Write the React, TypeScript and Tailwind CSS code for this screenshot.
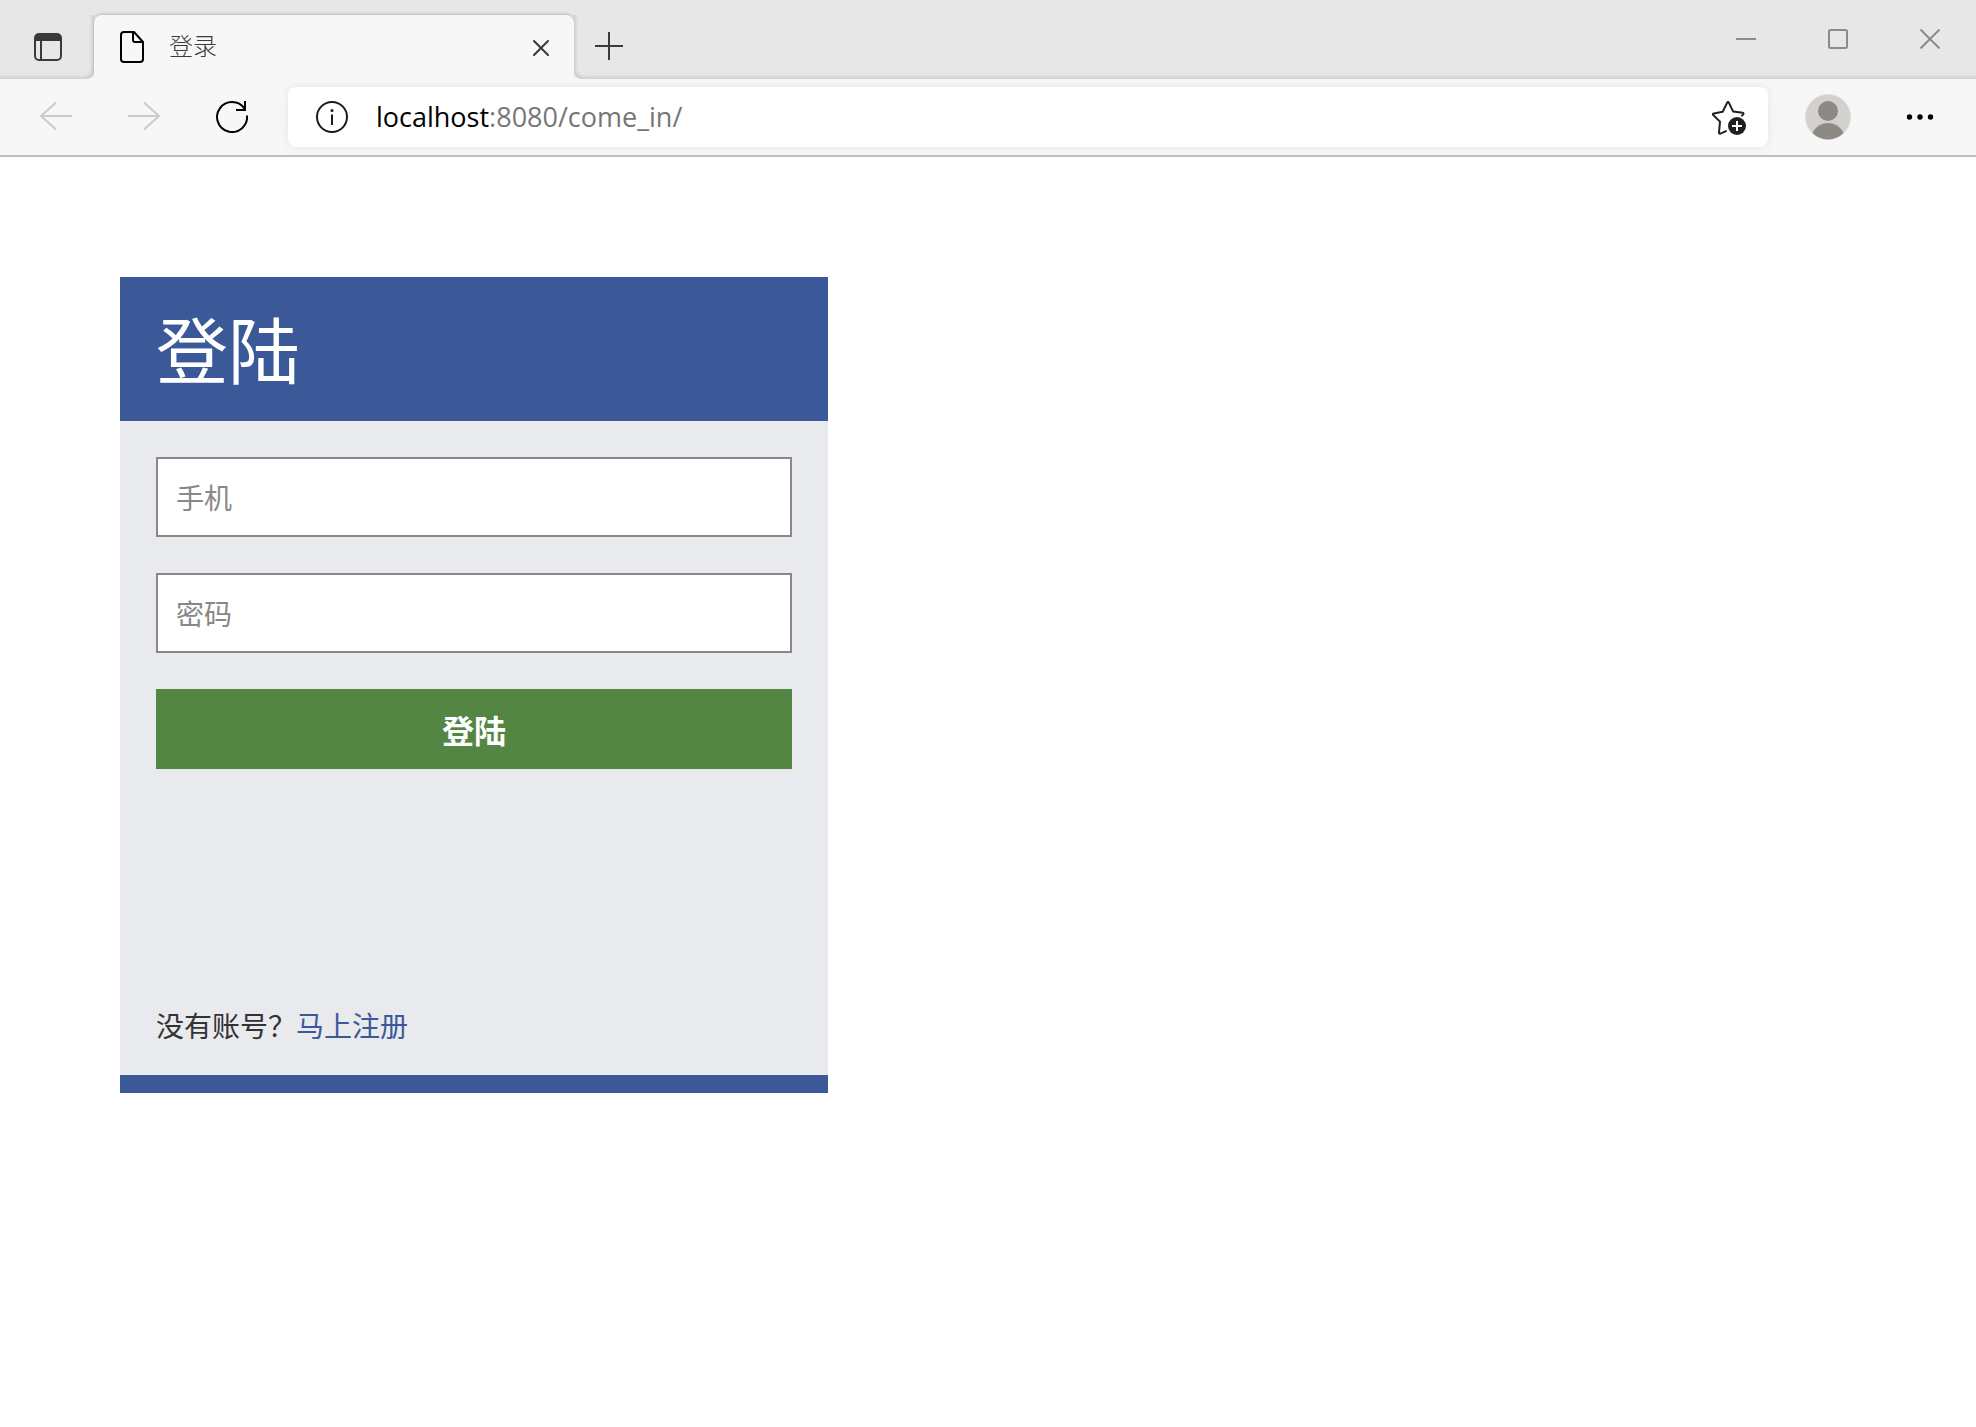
import { useState } from "react";

function TabsMenuIcon() {
  return (
    <svg width="28" height="28" viewBox="0 0 28 28" fill="none" aria-hidden="true">
      <rect x="1" y="1" width="26" height="26" rx="4" stroke="#3a3a3a" strokeWidth="2" />
      <path d="M1 8V5a4 4 0 0 1 4-4h18a4 4 0 0 1 4 4v3z" fill="#3a3a3a" />
      <path d="M7 8v19" stroke="#3a3a3a" strokeWidth="2" />
    </svg>
  );
}

function PageIcon() {
  return (
    <svg width="24" height="32" viewBox="0 0 24 32" fill="none" stroke="#000" strokeWidth="2" strokeLinejoin="round" aria-hidden="true">
      <path d="M4 1h10l9 10v17a3 3 0 0 1-3 3H4a3 3 0 0 1-3-3V4a3 3 0 0 1 3-3z" />
      <path d="M13 1v8a2 2 0 0 0 2 2h8" />
    </svg>
  );
}

function CrossIcon() {
  return (
    <svg width="16" height="18" viewBox="0 -2 16 18" stroke="#3a3a3a" strokeWidth="2" strokeLinecap="round" aria-hidden="true">
      <path d="M1 1l14 14M15 1L1 15" />
    </svg>
  );
}

function PlusIcon() {
  return (
    <svg width="28" height="30" viewBox="0 0 28 30" stroke="#3a3a3a" strokeWidth="2" aria-hidden="true">
      <path d="M0 14h28M14 0v28" />
    </svg>
  );
}

function BackIcon() {
  return (
    <svg width="32" height="30" viewBox="0 0 32 30" fill="none" stroke="#cacaca" strokeWidth="2" strokeLinejoin="round" aria-hidden="true">
      <path d="M16 0.5L1 14l15 13.5M1 14h31" />
    </svg>
  );
}

function ForwardIcon() {
  return (
    <svg width="32" height="30" viewBox="0 0 32 30" fill="none" stroke="#cacaca" strokeWidth="2" strokeLinejoin="round" aria-hidden="true">
      <path d="M16 0.5L31 14 16 27.5M31 14H0" />
    </svg>
  );
}

function ReloadIcon() {
  return (
    <svg width="32" height="32" viewBox="0 0 32 32" fill="none" stroke="#000" strokeWidth="2" aria-hidden="true">
      <path d="M31 14.5A15 15 0 1 1 28.5 7.6" />
      <path d="M29 0v9h-9" />
    </svg>
  );
}

function InfoIcon() {
  return (
    <svg width="32" height="32" viewBox="0 0 32 32" fill="none" aria-hidden="true">
      <circle cx="16" cy="16" r="15" stroke="#1b1b1b" strokeWidth="2" />
      <circle cx="16" cy="9.6" r="1.5" fill="#1b1b1b" />
      <path d="M16 13.5V24" stroke="#1b1b1b" strokeWidth="2" />
    </svg>
  );
}

function AddFavoriteIcon() {
  return (
    <svg width="34" height="36" viewBox="0 -2 34 36" fill="none" aria-hidden="true">
      <path
        d="M14 30.2l-5.6 2.5a1 1 0 0 1-1.4-1.1L8 20.6 1.2 14a.9.9 0 0 1 .5-1.6l9-1.6 4.500-9.200a.9.9 0 0 1 1.6 0l4.400 9 9.400 1.200c.9.1 1.100 1 .6 1.600L30 14.600"
        stroke="#202020"
        strokeWidth="2"
        strokeLinecap="round"
        strokeLinejoin="round"
      />
      <circle cx="25" cy="25" r="9" fill="#202020" />
      <path d="M20 25h10M25 20v10" stroke="#fff" strokeWidth="2" />
    </svg>
  );
}

function ProfileIcon() {
  return (
    <svg width="46" height="46" viewBox="0 0 46 46" aria-hidden="true">
      <circle cx="23" cy="23" r="22.5" fill="#d2d1cd" stroke="#dedddb" />
      <circle cx="23" cy="17" r="10" fill="#8d8985" />
      <path d="M7.5 39C10.5 32.5 16.5 29 23 29s12.5 3.5 15.5 10A22 22 0 0 1 7.5 39z" fill="#8d8985" />
    </svg>
  );
}

function MoreIcon() {
  return (
    <svg width="28" height="6" viewBox="0 0 28 6" aria-hidden="true">
      <circle cx="3.5" cy="3" r="2.7" />
      <circle cx="14" cy="3" r="2.7" />
      <circle cx="24.5" cy="3" r="2.7" />
    </svg>
  );
}

const windowControls = [
  { label: "最小化", icon: <path d="M0 10h20" /> },
  { label: "最大化", icon: <rect x="1" y="1" width="18" height="18" rx="1.5" /> },
  { label: "关闭", icon: <path d="M0.5 0.5l19 19M19.5 0.5l-19 19" /> },
];

function TabStrip() {
  return (
    <div className="flex h-[79px] overflow-hidden bg-[#f7f7f7]">
      <div className="flex w-[94px] shrink-0 flex-col bg-linear-to-b from-[#e7e7e7] from-50% to-transparent to-50%">
        <div className="h-[15px] shrink-0" />
        <div className="flex flex-1 items-center rounded-br-lg bg-[#e7e7e7] pl-[34px] shadow-[inset_-2px_-2px_4px_-1px_rgba(0,0,0,0.16)]">
          <button type="button" aria-label="标签页操作菜单">
            <TabsMenuIcon />
          </button>
        </div>
      </div>

      <div className="w-[480px] shrink-0 bg-[#e7e7e7] pt-[15px]">
        <div className="flex h-16 items-center rounded-t-lg bg-[#f7f7f7] pr-[25px] pl-[26px] shadow-[0_-1px_3px_rgba(0,0,0,0.2)]">
          <PageIcon />
          <span className="ml-[25px] flex-1 pb-1 text-2xl font-light whitespace-nowrap text-[#3a3a3a]">登录</span>
          <button type="button" aria-label="关闭标签页">
            <CrossIcon />
          </button>
        </div>
      </div>

      <div className="flex min-w-0 flex-1 flex-col bg-linear-to-b from-[#e7e7e7] from-50% to-transparent to-50%">
        <div className="h-[15px] shrink-0" />
        <div className="flex flex-1 items-center rounded-bl-lg bg-[#e7e7e7] pl-[21px] shadow-[inset_2px_-2px_4px_-1px_rgba(0,0,0,0.16)]">
          <button type="button" aria-label="新建标签页">
            <PlusIcon />
          </button>
          <div className="ml-auto flex h-12 self-start">
            {windowControls.map((control) => (
              <button
                key={control.label}
                type="button"
                aria-label={control.label}
                className="flex w-[92px] items-center justify-center"
              >
                <svg width="20" height="20" viewBox="0 0 20 20" fill="none" stroke="#8b8b8b" strokeWidth="2" aria-hidden="true">
                  {control.icon}
                </svg>
              </button>
            ))}
          </div>
        </div>
      </div>
    </div>
  );
}

function Toolbar() {
  const navButton = "flex w-[88px] items-center justify-center";
  const sideButton = "flex w-[92px] items-center justify-center";

  return (
    <div className="flex border-b-2 border-[#bdbdbd] bg-[#f7f7f7] py-2 pr-[10px] pl-3">
      <button type="button" aria-label="后退" disabled className={navButton}>
        <BackIcon />
      </button>
      <button type="button" aria-label="前进" disabled className={navButton}>
        <ForwardIcon />
      </button>
      <button type="button" aria-label="刷新" className={navButton}>
        <ReloadIcon />
      </button>

      <div className="mr-[14px] ml-3 flex h-[60px] min-w-0 flex-1 items-center rounded-lg bg-white pr-[22px] pl-7 shadow-[0_0_8px_rgba(0,0,0,0.08)]">
        <button type="button" aria-label="查看站点信息">
          <InfoIcon />
        </button>
        <span className="ml-7 flex-1 truncate font-['Open_Sans','Noto_Sans',sans-serif] text-[27px] text-[#767676]">
          <span className="text-black">localhost</span>:8080/come_in/
        </span>
        <button type="button" aria-label="添加到收藏夹">
          <AddFavoriteIcon />
        </button>
      </div>

      <button type="button" aria-label="个人资料" className={sideButton}>
        <ProfileIcon />
      </button>
      <button type="button" aria-label="设置及其他" className={sideButton}>
        <MoreIcon />
      </button>
    </div>
  );
}

interface FieldProps {
  name: string;
  label: string;
  type: string;
  value: string;
  onChange: (value: string) => void;
}

function Field({ name, label, type, value, onChange }: FieldProps) {
  return (
    <input
      name={name}
      type={type}
      value={value}
      placeholder={label}
      aria-label={label}
      onChange={(e) => onChange(e.target.value)}
      className="block h-20 w-full border-2 border-[#888] bg-white px-[18px] text-[28px] text-[#333] outline-none placeholder:text-[#888]"
    />
  );
}

function LoginCard() {
  const [phone, setPhone] = useState("");
  const [password, setPassword] = useState("");

  return (
    <section className="w-full max-w-[708px] border-b-[18px] border-[#3b5998] bg-[#e9eaee]">
      <h1 className="bg-[#3b5998] px-9 pt-[22px] pb-[26px] text-7xl leading-[96px] text-white">登陆</h1>
      <form className="flex flex-col gap-9 px-9 pt-9" onSubmit={(e) => e.preventDefault()}>
        <Field name="phone" label="手机" type="tel" value={phone} onChange={setPhone} />
        <Field name="password" label="密码" type="password" value={password} onChange={setPassword} />
        <button type="submit" className="h-20 bg-[#538642] text-[32px] font-bold text-white">
          登陆
        </button>
      </form>
      <p className="px-9 pt-[235px] pb-[29px] text-[28px] leading-[42px] text-[#333]">
        没有账号？
        <a href="#register" className="text-[#3b5998]">
          马上注册
        </a>
      </p>
    </section>
  );
}

export default function App() {
  return (
    <div className="min-h-screen bg-white font-['Noto_Sans_CJK_SC',sans-serif]">
      <header>
        <TabStrip />
        <Toolbar />
      </header>
      <main className="px-[120px] py-[120px]">
        <LoginCard />
      </main>
    </div>
  );
}
